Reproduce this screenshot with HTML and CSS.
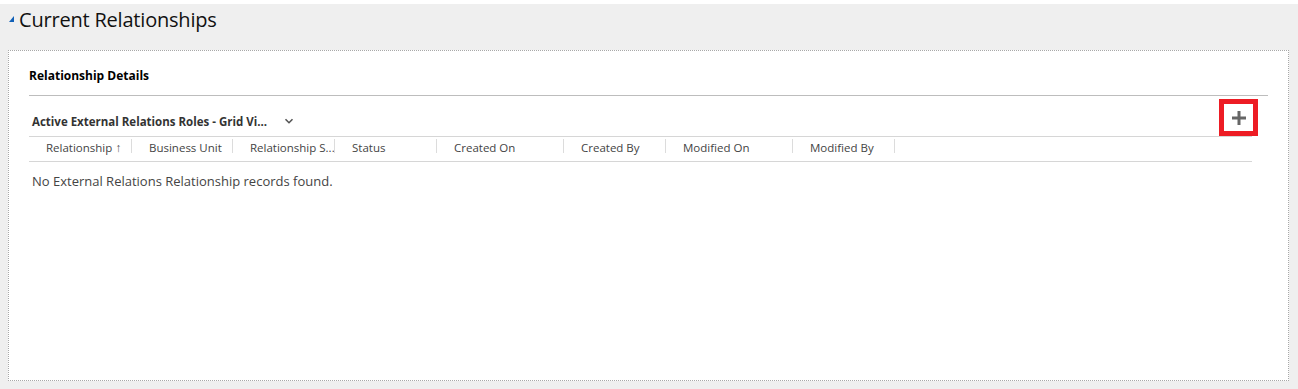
FILE: index.html
```html
<!DOCTYPE html>
<html lang="en">
<head>
    <meta charset="UTF-8">
    <title>Current Relationships</title>
    <link rel="stylesheet" href="styles.css">
</head>
<body>
    <div class="section">
        <div class="section-header">
            <span class="toggle"></span>
            <h2 class="section-title">Current Relationships</h2>
        </div>
        <div class="section-body">
            <div class="details-title">Relationship Details</div>
            <div class="grid">
                <div class="grid-toolbar">
                    <span class="view-name">Active External Relations Roles - Grid Vi...</span>
                    <svg class="chevron" width="10" height="10" viewBox="0 0 10 10">
                        <path d="M1.5 3.2 L5 6.7 L8.5 3.2" fill="none" stroke="#555" stroke-width="1.6"/>
                    </svg>
                    <button class="add-button" title="Add">
                        <svg width="14" height="14" viewBox="0 0 14 14">
                            <rect x="5.5" y="0" width="3" height="14" fill="#666"/>
                            <rect x="0" y="5.5" width="14" height="3" fill="#666"/>
                        </svg>
                    </button>
                </div>
                <div class="grid-header">
                    <div class="col w-103">Relationship <span class="sort">&#8593;</span></div>
                    <div class="col w-101">Business Unit</div>
                    <div class="col w-102">Relationship S...</div>
                    <div class="col w-102">Status</div>
                    <div class="col w-127">Created On</div>
                    <div class="col w-102">Created By</div>
                    <div class="col w-127">Modified On</div>
                    <div class="col w-102">Modified By</div>
                </div>
                <div class="grid-empty">No External Relations Relationship records found.</div>
            </div>
        </div>
    </div>
</body>
</html>
```

FILE: styles.css
```css
body {
    margin: 0;
    padding-top: 4px;
    background-color: #ffffff;
    font-family: 'Open Sans', 'Liberation Sans', sans-serif;
    color: #444;
}

.section {
    background-color: #efefef;
    padding: 0 9px 8px 8px;
}

.section-header {
    height: 46px;
    display: flex;
    align-items: flex-start;
}

.toggle {
    width: 0;
    height: 0;
    margin: 12px 5px 0 1px;
    border-left: 5px solid transparent;
    border-bottom: 6px solid #1160b7;
}

.section-title {
    margin: 2px 0 0 0;
    font-size: 20px;
    font-weight: normal;
    color: #111;
    letter-spacing: -0.2px;
}

.section-body {
    height: 329px;
    background-color: #ffffff;
    border: 1px dotted #a8a8a8;
    padding: 0 20px 0 20px;
}

.details-title {
    height: 44px;
    line-height: 49px;
    font-size: 12px;
    font-weight: bold;
    color: #000;
    border-bottom: 1px solid #bdbdbd;
}

.grid {
    margin-right: 16px;
}

.grid-toolbar {
    height: 40px;
    display: flex;
    align-items: flex-end;
    border-bottom: 1px solid #d6d6d6;
}

.view-name {
    font-size: 11.5px;
    font-weight: bold;
    color: #333;
    margin: 0 0 7px 3px;
}

.chevron {
    margin: 0 0 10px 17px;
}

.add-button {
    width: 39px;
    height: 37px;
    margin: 3px -6px 0 auto;
    background: #ffffff;
    border: 5px solid #ed1c24;
    padding: 0;
    display: flex;
    align-items: center;
    justify-content: center;
    align-self: flex-start;
}

.grid-header {
    height: 24px;
    display: flex;
    border-bottom: 1px solid #d6d6d6;
}

.col {
    box-sizing: border-box;
    padding-left: 17px;
    font-size: 11.5px;
    line-height: 22px;
    color: #444;
    position: relative;
}

.col::after {
    content: '';
    position: absolute;
    right: 0;
    top: 2px;
    height: 14px;
    border-right: 1px solid #dcdcdc;
}

.sort {
    font-size: 12px;
    color: #555;
}

.w-101 { width: 101px; }
.w-102 { width: 102px; }
.w-103 { width: 103px; }
.w-127 { width: 127px; }

.grid-empty {
    padding: 10px 0 0 3px;
    font-size: 13px;
    color: #444;
}
```
